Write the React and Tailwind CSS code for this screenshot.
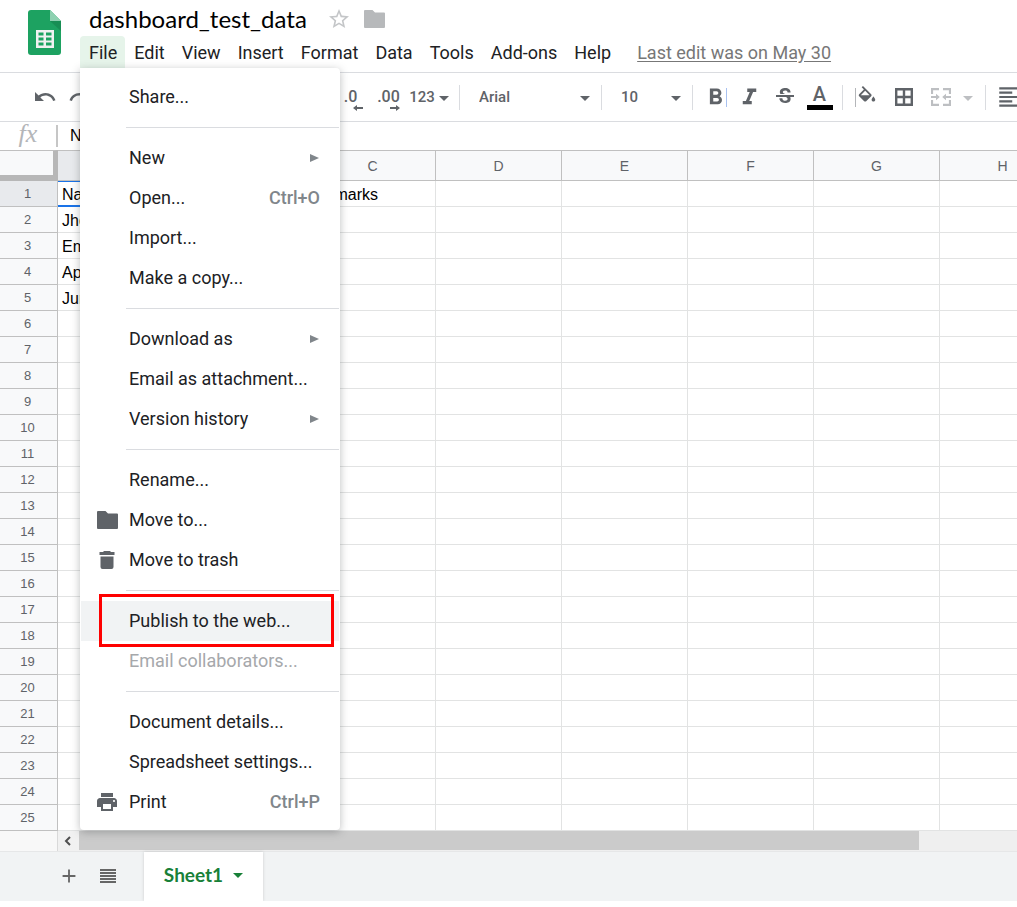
import { useState } from 'react';
import {
  MdAdd,
  MdAttachMoney,
  MdFormatAlignLeft,
  MdFormatBold,
  MdFormatItalic,
  MdFormatPaint,
  MdPercent,
  MdPrint,
  MdRedo,
  MdStarBorder,
  MdStrikethroughS,
  MdUndo,
} from 'react-icons/md';

const MENUS = ['File', 'Edit', 'View', 'Insert', 'Format', 'Data', 'Tools', 'Add-ons', 'Help'];

const COLUMNS = ['A', 'B', 'C', 'D', 'E', 'F', 'G', 'H'];

const DATA = [
  ['Name', 'Subject', 'Remarks'],
  ['Jhon'],
  ['Emma'],
  ['April'],
  ['June'],
];

const FILE_MENU = [
  [{ label: 'Share...' }],
  [
    { label: 'New', submenu: true },
    { label: 'Open...', shortcut: 'Ctrl+O' },
    { label: 'Import...' },
    { label: 'Make a copy...' },
  ],
  [
    { label: 'Download as', submenu: true },
    { label: 'Email as attachment...' },
    { label: 'Version history', submenu: true },
  ],
  [
    { label: 'Rename...' },
    { label: 'Move to...', icon: <FolderIcon /> },
    { label: 'Move to trash', icon: <TrashIcon /> },
  ],
  [
    { label: 'Publish to the web...', active: true },
    { label: 'Email collaborators...', disabled: true },
  ],
  [
    { label: 'Document details...' },
    { label: 'Spreadsheet settings...' },
    { label: 'Print', shortcut: 'Ctrl+P', icon: <MdPrint size={24} /> },
  ],
];

function SheetsLogo() {
  return (
    <svg width="34" height="46" viewBox="0 0 34 46">
      <path d="M3 0h19l11 11v31a3 3 0 0 1-3 3H3a3 3 0 0 1-3-3V3a3 3 0 0 1 3-3z" fill="#1da261" />
      <path d="M22 11h11v10z" fill="#15804b" opacity="0.6" />
      <path d="M22 0l11 11H22z" fill="#8ed1b1" />
      <path
        fillRule="evenodd"
        fill="#f1f1f1"
        d="M8 20h18v18H8zM10.500 22.500v3h5v-3zM18 22.500v3h5.500v-3zM10.500 27.500v3h5v-3zM18 27.500v3h5.500v-3zM10.500 32.500v3h5v-3zM18 32.500v3h5.500v-3z"
      />
    </svg>
  );
}

function FolderIcon() {
  return (
    <svg width="21" height="18" viewBox="0 0 21 18" fill="currentColor">
      <path d="M1 0h7.500l2.500 2.500h9a1 1 0 0 1 1 1V17a1 1 0 0 1-1 1H1a1 1 0 0 1-1-1V1a1 1 0 0 1 1-1z" />
    </svg>
  );
}

function TrashIcon() {
  return (
    <svg width="16" height="18" viewBox="0 0 16 18" fill="currentColor">
      <path d="M5 0h6l1 1h3.500v3H.5V1H4zM1.500 5.500h13V16a2 2 0 0 1-2 2h-9a2 2 0 0 1-2-2z" />
    </svg>
  );
}

function FillIcon() {
  return (
    <svg width="22" height="22" viewBox="0 0 24 24" fill="currentColor">
      <path d="M16.560 8.940L7.620 0 6.210 1.410l2.380 2.380-5.150 5.150a1.490 1.490 0 0 0 0 2.120l5.500 5.500c.29.29.68.44 1.060.44s.77-.15 1.060-.44l5.500-5.500c.59-.58.59-1.530 0-2.120zM5.210 10L10 5.210 14.790 10zM19 11.500s-2 2.170-2 3.500c0 1.100.9 2 2 2s2-.9 2-2c0-1.330-2-3.500-2-3.500z" />
    </svg>
  );
}

function BordersIcon() {
  return (
    <svg width="18" height="18" viewBox="0 0 18 18" fill="none" stroke="currentColor" strokeWidth="2.400">
      <path d="M1.200 1.200h15.600v15.600H1.200zM9 1v16M1 9h16" />
    </svg>
  );
}

function MergeIcon() {
  return (
    <svg width="20" height="18" viewBox="0 0 20 18" fill="none" stroke="currentColor" strokeWidth="2.200">
      <path d="M1 6V1.100h7M12 1.100h7V6M1 12v4.900h7M12 16.900h7V12" />
      <path d="M0 9h6M20 9h-6" strokeWidth="1.800" />
      <path d="M5 5.800L8.800 9 5 12.200zM15 5.800L11.200 9l3.800 3.200z" fill="currentColor" stroke="none" />
    </svg>
  );
}

function Caret({ className = '' }) {
  return (
    <svg width="10" height="5" viewBox="0 0 10 5" fill="currentColor" className={className}>
      <path d="M0 0h10L5 5z" />
    </svg>
  );
}

function DecimalArrow({ right }) {
  return (
    <svg
      width="10"
      height="6"
      viewBox="0 0 10 6"
      fill="currentColor"
      className={right ? 'rotate-180' : ''}
    >
      <path d="M0 3l4-3v2h6v2H4v2z" />
    </svg>
  );
}

function ToolButton({ label, children, className = 'w-[35px]' }) {
  return (
    <button aria-label={label} className={`relative flex h-9 shrink-0 items-center justify-center ${className}`}>
      {children}
    </button>
  );
}

function Divider() {
  return <span className="mx-[5px] h-[25px] w-px shrink-0 bg-[#dadce0]" />;
}

function ToolSelect({ label, options, className }) {
  return (
    <div className={`relative flex shrink-0 items-center ${className}`}>
      <select aria-label={label} className="h-9 w-full appearance-none bg-transparent pl-[14px] text-[15px] font-medium">
        {options.map((option) => (
          <option key={option}>{option}</option>
        ))}
      </select>
      <Caret className="pointer-events-none absolute right-[6px] mt-[2px]" />
    </div>
  );
}

function MenuItem({ item }) {
  return (
    <li className="relative">
      <button
        disabled={item.disabled}
        className={`flex h-10 w-full items-center pr-[19px] text-left text-lg ${
          item.active ? 'bg-[#f1f3f4]' : ''
        } ${item.disabled ? 'text-[#a6a8ab]' : 'text-[#202124]'}`}
      >
        <span className="flex w-12 shrink-0 justify-center pl-1 text-[#5f6368]">{item.icon}</span>
        <span className="flex-1">{item.label}</span>
        {item.shortcut && <span className="font-medium text-[#80868b]">{item.shortcut}</span>}
        {item.submenu && (
          <svg width="9" height="8" viewBox="0 0 9 8" className="mr-px fill-[#80868b]">
            <path d="M0 0l9 4-9 4z" />
          </svg>
        )}
      </button>
      {item.active && (
        <span className="pointer-events-none absolute -top-[7px] right-[5px] -bottom-[6px] left-[18px] z-10 border-3 border-[#fe0000]" />
      )}
    </li>
  );
}

function FileMenu() {
  return (
    <div className="absolute top-full left-0 z-20 w-[260px] rounded-b-[4px] rounded-tr-[4px] border border-transparent bg-white pt-2 pb-[7px] shadow-[0_2px_8px_rgba(60,64,67,0.35)]">
      {FILE_MENU.map((group, i) => (
        <ul key={i} className={i > 0 ? 'pt-[10px]' : ''}>
          {group.map((item) => (
            <MenuItem key={item.label} item={item} />
          ))}
          {i < FILE_MENU.length - 1 && <li className="mt-[10px] ml-[45px] h-px bg-[#dadce0]" />}
        </ul>
      ))}
    </div>
  );
}

function Header({ openMenu, setOpenMenu }) {
  const [title, setTitle] = useState('dashboard_test_data');

  return (
    <header className="flex h-[73px] border-b border-[#dadce0] pl-7">
      <div className="w-[52px] shrink-0 pt-[10px]">
        <SheetsLogo />
      </div>
      <div className="flex-1">
        <div className="flex h-9 items-center pt-[2px] pl-[9px]">
          <input
            aria-label="Document title"
            value={title}
            onChange={(e) => setTitle(e.target.value)}
            className="w-[238px] font-['Lato','Roboto',sans-serif] text-2xl text-black outline-none"
          />
          <button aria-label="Star" className="text-[#c4c6c8]">
            <MdStarBorder size={24} />
          </button>
          <button aria-label="Move to folder" className="ml-[13px] text-[#b7b9bb]">
            <FolderIcon />
          </button>
        </div>
        <nav className="flex h-8 items-stretch text-lg whitespace-nowrap text-[#202124]">
          {MENUS.map((menu) => (
            <div key={menu} className="relative">
              <button
                onClick={() => setOpenMenu(openMenu === menu ? null : menu)}
                className={`h-full rounded-t-[4px] pt-[2px] pr-2 pl-[9px] ${
                  openMenu === menu ? 'bg-[#e6f4ea]' : ''
                }`}
              >
                {menu}
              </button>
              {menu === 'File' && openMenu === 'File' && <FileMenu />}
            </div>
          ))}
          <a href="#history" className="ml-[18px] self-center pt-[2px] text-[#777] underline underline-offset-2">
            Last edit was on May 30
          </a>
        </nav>
      </div>
    </header>
  );
}

function Toolbar() {
  return (
    <div className="flex h-[49px] items-center overflow-hidden border-b border-[#dadce0] pl-[27px] text-[#5f6368]">
      <ToolButton label="Undo"><MdUndo size={24} /></ToolButton>
      <ToolButton label="Redo"><MdRedo size={24} /></ToolButton>
      <ToolButton label="Print"><MdPrint size={22} /></ToolButton>
      <ToolButton label="Paint format"><MdFormatPaint size={22} /></ToolButton>
      <Divider />
      <ToolSelect label="Zoom" options={['100%', '75%', '50%']} className="w-[77px]" />
      <Divider />
      <ToolButton label="Currency"><MdAttachMoney size={20} /></ToolButton>
      <ToolButton label="Percent"><MdPercent size={20} /></ToolButton>
      <ToolButton label="Decrease decimal places">
        <span className="flex flex-col items-end pt-[6px]">
          <span className="mr-[6px] text-base leading-4 font-medium">.0</span>
          <DecimalArrow />
        </span>
      </ToolButton>
      <ToolButton label="Increase decimal places">
        <span className="flex flex-col items-end pt-[6px]">
          <span className="text-base leading-4 font-medium">.00</span>
          <DecimalArrow right />
        </span>
      </ToolButton>
      <ToolButton label="More formats" className="w-12 gap-1 pr-[2px] text-[15px] font-medium">
        123
        <Caret className="mt-[2px]" />
      </ToolButton>
      <Divider />
      <ToolSelect label="Font" options={['Arial', 'Georgia', 'Verdana']} className="w-[131px]" />
      <Divider />
      <ToolSelect label="Font size" options={['10', '12', '14']} className="w-20" />
      <Divider />
      <ToolButton label="Bold" className="w-[34px]">
        <MdFormatBold size={27} />
        <span className="absolute right-[5px] h-[19px] w-px bg-[#a8c1f0]" />
      </ToolButton>
      <ToolButton label="Italic"><MdFormatItalic size={27} /></ToolButton>
      <ToolButton label="Strikethrough"><MdStrikethroughS size={24} /></ToolButton>
      <ToolButton label="Text color">
        <span className="flex flex-col items-center">
          <span className="text-xl leading-5 font-medium">A</span>
          <span className="mt-px h-[5px] w-[26px] bg-black" />
        </span>
      </ToolButton>
      <Divider />
      <ToolButton label="Fill color" className="w-[38px]">
        <span className="absolute left-[7px] h-[19px] w-px bg-[#b4b6b9]" />
        <FillIcon />
      </ToolButton>
      <ToolButton label="Borders"><BordersIcon /></ToolButton>
      <ToolButton label="Merge cells" className="w-[59px] gap-3 pl-[3px] text-[#bdbfc2]">
        <MergeIcon />
        <Caret className="mt-[2px]" />
      </ToolButton>
      <Divider />
      <ToolButton label="Align"><MdFormatAlignLeft size={26} /></ToolButton>
    </div>
  );
}

function FormulaBar({ value, onChange }) {
  return (
    <div className="flex h-7 items-center">
      <label
        htmlFor="formula"
        className="w-14 pb-1 text-center font-['Liberation_Serif',serif] text-[26px] leading-6 text-[#b4b6b9] italic"
      >
        fx
      </label>
      <span className="h-[22px] w-[2px] bg-[#c6c6c6]" />
      <input
        id="formula"
        value={value}
        onChange={(e) => onChange(e.target.value)}
        className="flex-1 pl-3 font-['Liberation_Sans',sans-serif] text-base text-black outline-none"
      />
    </div>
  );
}

function Grid({ firstCell }) {
  const rows = Array.from({ length: 25 }, (_, i) => i);

  return (
    <div className="overflow-hidden">
      <table className="w-[1066px] table-fixed border-separate border-spacing-0 font-['Liberation_Sans',sans-serif]">
        <thead>
          <tr className="h-[31px] text-sm text-[#5f6368]">
            <th className="w-[58px] border-t border-r-[5px] border-b-[6px] border-[#b7b7b7] border-t-[#c0c0c0] bg-[#f8f9fa] p-0" />
            {COLUMNS.map((col) => (
              <th
                key={col}
                className={`w-[126px] border-y border-r border-[#c0c0c0] p-0 font-normal ${
                  col === 'A' ? 'bg-[#e8eaed]' : 'bg-[#f8f9fa]'
                }`}
              >
                {col}
              </th>
            ))}
          </tr>
        </thead>
        <tbody>
          {rows.map((row) => (
            <tr key={row} className="h-[26px]">
              <th
                className={`border-r border-b border-[#c0c0c0] py-0 pr-[2px] pl-0 text-[13px] leading-5 font-normal text-[#5f6368] ${
                  row === 0 ? 'bg-[#e8eaed]' : 'bg-[#f8f9fa]'
                }`}
              >
                {row + 1}
              </th>
              {COLUMNS.map((col, c) => (
                <td
                  key={col}
                  className={`border-r border-[#e2e3e3] pt-[2px] pb-0 pl-1 text-base leading-5 text-black ${
                    row === 0 && c === 0 ? 'border-t border-b-2 border-y-[#1a73e8]' : 'border-b'
                  }`}
                >
                  {row === 0 && c === 0 ? firstCell : DATA[row]?.[c]}
                </td>
              ))}
            </tr>
          ))}
        </tbody>
      </table>
    </div>
  );
}

function ScrollBar() {
  return (
    <div className="flex h-5 bg-[#efefef]">
      <div className="w-[58px] shrink-0 border-r border-[#d9d9d9] bg-[#f8f8f8]" />
      <button aria-label="Scroll left" className="flex w-[21px] shrink-0 items-center justify-center bg-[#f1f1f1] pr-[2px]">
        <svg width="7" height="10" viewBox="0 0 7 10" fill="none" stroke="#505050" strokeWidth="2">
          <path d="M6 1L2 5l4 4" />
        </svg>
      </button>
      <div className="flex-1">
        <div className="h-[19px] w-[89.500%] bg-[#cbcbcb]" />
      </div>
    </div>
  );
}

function SheetTabs() {
  return (
    <footer className="flex h-[50px] border-t border-[#e6e7e8] bg-[#f1f3f4] pl-[50px] text-[#666]">
      <button aria-label="Add sheet" className="flex w-[38px] items-center justify-center pb-[2px]">
        <MdAdd size={22} />
      </button>
      <button aria-label="All sheets" className="flex w-10 items-center justify-center pb-[2px]">
        <svg width="16" height="14" viewBox="0 0 16 14" fill="currentColor">
          <path d="M0 0h16v2H0zM0 3h16v2H0zM0 6h16v2H0zM0 9h16v2H0zM0 12h16v2H0z" />
        </svg>
      </button>
      <button className="ml-4 flex w-[119px] items-center justify-center gap-[10px] bg-white pb-[2px] font-['Lato','Roboto',sans-serif] text-[19px] font-bold text-[#188038] shadow-[0_0_3px_rgba(60,64,67,0.2)]">
        Sheet1
        <Caret />
      </button>
    </footer>
  );
}

export default function App() {
  const [openMenu, setOpenMenu] = useState('File');
  const [firstCell, setFirstCell] = useState(DATA[0][0]);

  return (
    <div className="overflow-x-hidden bg-white font-['Roboto',sans-serif]">
      <Header openMenu={openMenu} setOpenMenu={setOpenMenu} />
      <Toolbar />
      <FormulaBar value={firstCell} onChange={setFirstCell} />
      <Grid firstCell={firstCell} />
      <ScrollBar />
      <SheetTabs />
    </div>
  );
}
